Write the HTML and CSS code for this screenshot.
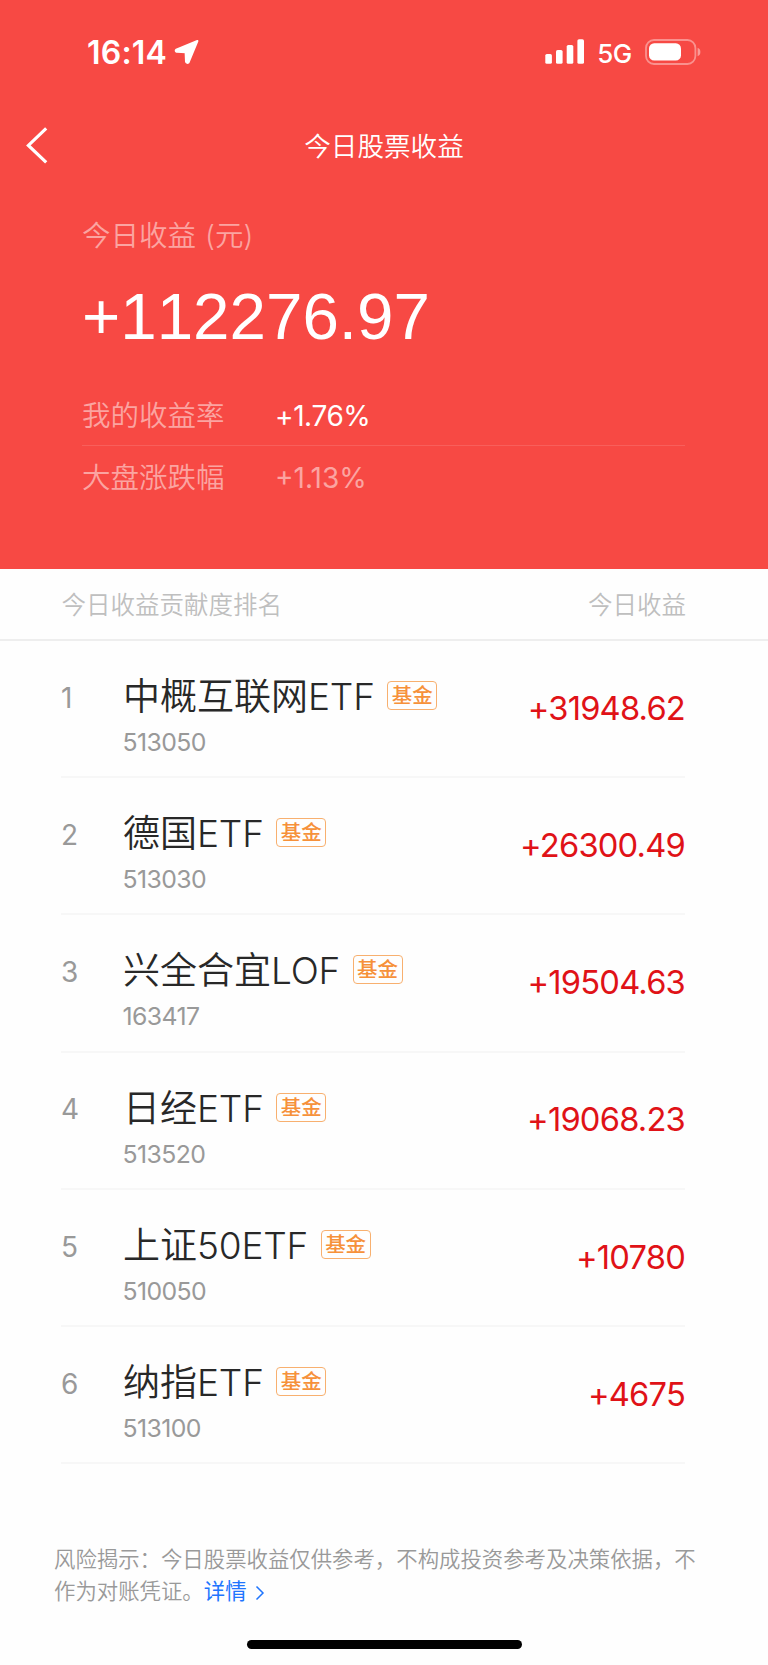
FILE: index.html
```html
<!DOCTYPE html>
<html lang="zh-CN">
<head>
<meta charset="utf-8">
<title>今日股票收益</title>
<link rel="stylesheet" href="styles.css">
</head>
<body>
<header class="hero">
  <div class="status">
    <span class="clock">16:14</span>
    <svg class="locate" width="26" height="26" viewBox="0 0 26 26"><path d="M23.4 2 2.2 10.6Q1 12 2.6 12.8L11.6 13.2 12 22.8Q13 24.6 14.6 23.4Z" fill="#fff" stroke="#fff" stroke-width="2" stroke-linejoin="round"/></svg>
    <svg class="signal" width="40" height="26" viewBox="0 0 40 26" fill="#fff"><rect x="0.3" y="15" width="6.6" height="9.8" rx="1.6"/><rect x="11" y="11" width="6.6" height="13.8" rx="1.6"/><rect x="21.7" y="6" width="6.6" height="18.8" rx="1.6"/><rect x="32.4" y="0.2" width="6.6" height="24.6" rx="1.6"/></svg>
    <span class="network">5G</span>
    <svg class="battery" width="57" height="26" viewBox="0 0 57 26"><rect x="1" y="1" width="49.4" height="24" rx="8" fill="none" stroke="#fff" stroke-opacity=".4" stroke-width="1.8"/><rect x="4" y="4.2" width="32" height="17.4" rx="5.2" fill="#fff"/><path d="M52.6 8.8Q55.4 9.8 55.4 13T52.6 17.2Z" fill="#fff" fill-opacity=".45"/></svg>
  </div>
  <nav class="nav">
    <svg class="back" width="24" height="38" viewBox="0 0 24 38"><path d="M21.2 2.4 3.4 19.4 21.2 36.4" fill="none" stroke="#fff" stroke-width="3.2"/></svg>
    <h1 class="title">今日股票收益</h1>
  </nav>
  <section class="summary">
    <div class="label">今日收益<span class="unit">(元)</span></div>
    <div class="total">+112276.97</div>
    <div class="rate mine"><span class="label">我的收益率</span><span class="value">+1.76%</span></div>
    <div class="rate market"><span class="label">大盘涨跌幅</span><span class="value">+1.13%</span></div>
  </section>
</header>
<main>
  <div class="columns"><span>今日收益贡献度排名</span><span>今日收益</span></div>
  <ol class="list">
    <li class="row"><span class="rank">1</span><div class="fund"><div class="name">中概互联网<span class="latin">ETF</span><span class="tag">基金</span></div><div class="code">513050</div></div><span class="amount">+31948.62</span></li>
    <li class="row"><span class="rank">2</span><div class="fund"><div class="name">德国<span class="latin">ETF</span><span class="tag">基金</span></div><div class="code">513030</div></div><span class="amount">+26300.49</span></li>
    <li class="row"><span class="rank">3</span><div class="fund"><div class="name">兴全合宜<span class="latin">LOF</span><span class="tag">基金</span></div><div class="code">163417</div></div><span class="amount">+19504.63</span></li>
    <li class="row"><span class="rank">4</span><div class="fund"><div class="name">日经<span class="latin">ETF</span><span class="tag">基金</span></div><div class="code">513520</div></div><span class="amount">+19068.23</span></li>
    <li class="row"><span class="rank">5</span><div class="fund"><div class="name">上证<span class="latin">50ETF</span><span class="tag">基金</span></div><div class="code">510050</div></div><span class="amount">+10780</span></li>
    <li class="row"><span class="rank">6</span><div class="fund"><div class="name">纳指<span class="latin">ETF</span><span class="tag">基金</span></div><div class="code">513100</div></div><span class="amount">+4675</span></li>
  </ol>
</main>
<footer class="notice">
  <p>风险揭示：今日股票收益仅供参考，不构成投资参考及决策依据，不<br>作为对账凭证。<a class="more">详情<svg width="10" height="16" viewBox="0 0 10 16"><path d="M1.5 1.5 8 8 1.5 14.5" fill="none" stroke="#1f75fe" stroke-width="1.5"/></svg></a></p>
  <div class="home"></div>
</footer>
</body>
</html>
```
FILE: styles.css
```css
* { box-sizing: border-box; margin: 0; padding: 0; }
body {
  width: 768px;
  height: 1665px;
  background: #fefefe;
  color: #282828;
  font-family: Inter, "Noto Sans CJK SC", sans-serif;
  font-weight: 350;
  display: flex;
  flex-direction: column;
  overflow: hidden;
}
.hero { height: 568.5px; background: #f74944; color: #fff; }
.status { height: 104px; padding: 0 66px 0 87px; display: flex; align-items: center; }
.clock { font-size: 32px; font-weight: 600; line-height: 40px; letter-spacing: 0.2px; margin-top: 2px; }
.locate { margin-left: 6.5px; }
.signal { margin-left: auto; }
.network { font-size: 26px; font-weight: 450; line-height: 32px; margin: 3px 12.5px 0 12.5px; letter-spacing: -0.6px; }
.battery { margin-left: 1px; }
.nav { height: 84px; display: flex; align-items: center; justify-content: center; position: relative; }
.back { position: absolute; left: 24.5px; top: 22px; }
.title { font-size: 26.6px; font-weight: 350; line-height: 40px; }
.summary { padding: 28px 83px 0 82px; }
.label { font-size: 28.5px; line-height: 40px; color: #fba4a1; }
.unit { margin-left: 9px; }
.total { margin-top: 25px; font: 65.5px/72px "Liberation Sans", sans-serif; font-kerning: none; }
.rate { display: flex; align-items: center; height: 61px; }
.rate .label { width: 193px; padding-top: 2px; }
.rate .value { font-size: 28px; letter-spacing: -0.4px; font-weight: 400; padding-top: 2px; }
.mine { margin-top: 32px; border-bottom: 1.5px solid #f85f5b; }
.market .value { color: #fba4a1; font-weight: 370; letter-spacing: 0; }
.columns {
  height: 72px;
  padding: 0 82px 1px 61.5px;
  border-bottom: 2px solid #eee;
  display: flex;
  justify-content: space-between;
  align-items: center;
  font-size: 24.5px;
  color: #bfbfbf;
}
.list { list-style: none; padding: 0.6px 83px 0 61px; }
.row { height: 137.2px; display: flex; border-bottom: 2px solid #f7f7f7; }
.rank { width: 62px; padding-top: 36.8px; font-size: 28px; line-height: 40px; color: #999; font-weight: 370; }
.fund { flex: 1; padding-top: 31px; }
.name { height: 50px; display: flex; align-items: center; font-size: 37px; line-height: 50px; white-space: nowrap; }
.latin { letter-spacing: -0.2px; }
.tag {
  margin-left: 12.5px;
  margin-top: -3px;
  width: 50px;
  height: 29px;
  border: 1.5px solid #f8b06f;
  border-radius: 4px;
  color: #f6913a;
  font-size: 20.5px;
  font-weight: 500;
  line-height: 28px;
  text-align: center;
}
.code { margin-top: 5px; margin-left: -0.5px; font-size: 24.8px; line-height: 30px; color: #999; letter-spacing: -0.6px; font-weight: 370; }
.amount { padding-top: 46.8px; font-size: 32.7px; line-height: 40px; letter-spacing: -0.8px; color: #e01217; font-weight: 370; }
.notice { flex: 1; padding: 79px 0 0 54px; font-size: 21.4px; line-height: 32px; color: #999; white-space: nowrap; }
.more { color: #1f75fe; font-weight: 400; }
.more svg { margin-left: 8px; vertical-align: -2px; }
.home { margin: 33px 0 0 192.5px; width: 275px; height: 9px; border-radius: 5px; background: #000; }
```
